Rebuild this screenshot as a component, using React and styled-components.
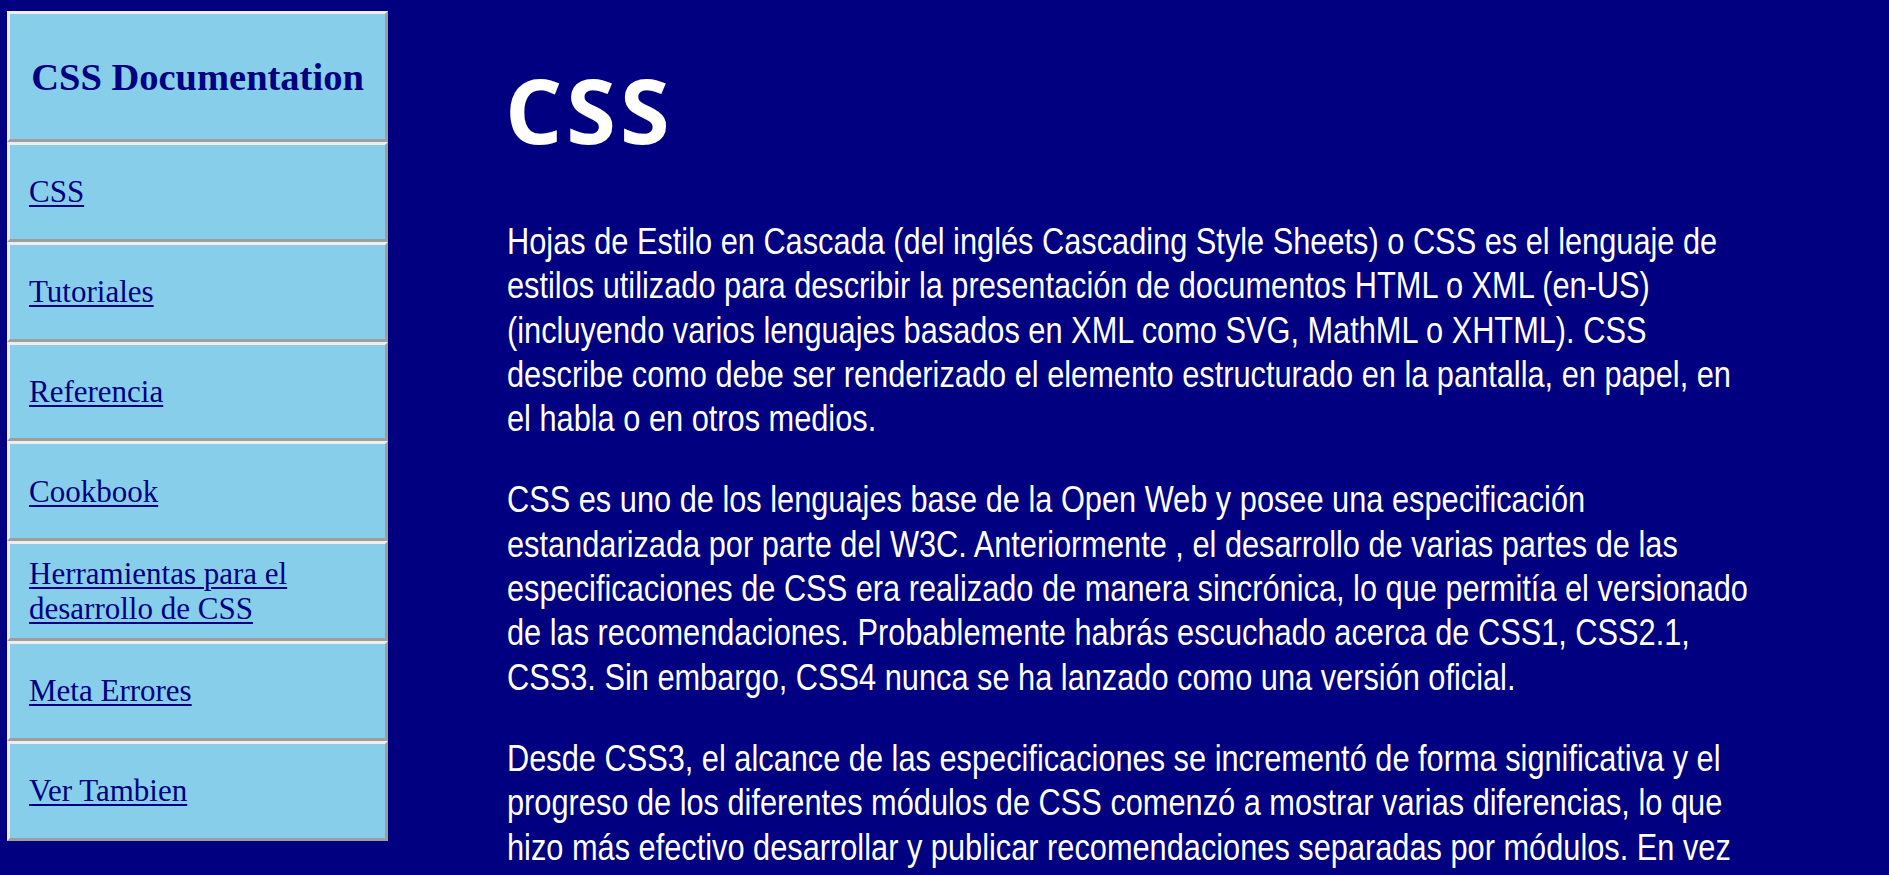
import React from "react";
import styled, { createGlobalStyle } from "styled-components";

const GlobalStyle = createGlobalStyle`
  html {
    overflow-x: hidden;
  }
  html, body {
    margin: 0;
    padding: 0;
    background: #000080;
  }
  body {
    font-family: "Liberation Serif", serif;
  }
`;

const Page = styled.div`
  display: flex;
  align-items: flex-start;
  padding: 11px 0 0 7px;
  min-height: 875px;
  box-sizing: border-box;
  background: #000080;
`;

const Sidebar = styled.nav`
  flex: 0 0 381px;
  display: flex;
  flex-direction: column;
`;

const Box = styled.div`
  box-sizing: border-box;
  height: ${(p) => p.$h}px;
  background: #87ceeb;
  border-style: solid;
  border-width: 3px;
  border-color: #eeeeee #9e9e9e #9e9e9e #eeeeee;
  display: flex;
  align-items: center;
  justify-content: ${(p) => (p.$center ? "center" : "flex-start")};
  padding: 0 ${(p) => (p.$center ? 0 : 19)}px;
`;

const NavTitle = styled.h2`
  margin: 0;
  font-family: "Liberation Serif", serif;
  font-weight: 700;
  font-size: 38.5px;
  color: #000080;
`;

const NavLink = styled.a`
  font-family: "Liberation Serif", serif;
  font-size: 31px;
  line-height: 35px;
  color: #000080;
  text-decoration: underline;
  text-decoration-thickness: 2px;
  text-underline-offset: 3px;
`;

const Main = styled.main`
  margin-left: 119px;
  width: 1253px;
  color: #ffffff;
`;

const Title = styled.h1`
  margin: 44px 0 0 -2px;
  font-family: "Open Sans", sans-serif;
  font-weight: 700;
  font-size: 90px;
  letter-spacing: 4px;
  line-height: 108px;
  color: #ffffff;
`;

/* Arial Narrow look: Liberation Sans compressed horizontally to 82% */
const Para = styled.p`
  margin: 0 0 37px 0;
  width: 1528px;
  font-family: "Liberation Sans", Arial, sans-serif;
  font-size: 37.5px;
  line-height: 44.3px;
  color: #ffffff;
  transform: scaleX(0.82);
  transform-origin: 0 0;
  &:first-of-type {
    margin-top: 56px;
  }
`;

const links = [
  "CSS",
  "Tutoriales",
  "Referencia",
  "Cookbook",
  "Herramientas para el desarrollo de CSS",
  "Meta Errores",
  "Ver Tambien",
];

export default function App() {
  return (
    <>
      <GlobalStyle />
      <Page>
        <Sidebar>
          <Box $h={131} $center>
            <NavTitle>CSS Documentation</NavTitle>
          </Box>
          {links.map((l) => (
            <Box key={l} $h={99.8}>
              <NavLink href="#">{l}</NavLink>
            </Box>
          ))}
        </Sidebar>
        <Main>
          <Title>CSS</Title>
          <Para>
            Hojas de Estilo en Cascada (del inglés Cascading Style Sheets) o CSS es el lenguaje de estilos
            utilizado para describir la presentación de documentos HTML o XML (en-US) (incluyendo varios
            lenguajes basados en XML como SVG, MathML o XHTML). CSS describe como debe ser renderizado el
            elemento estructurado en la pantalla, en papel, en el habla o en otros medios.
          </Para>
          <Para>
            CSS es uno de los lenguajes base de la Open Web y posee una especificación estandarizada por parte
            del W3C. Anteriormente , el desarrollo de varias partes de las especificaciones de CSS era realizado
            de manera sincrónica, lo que permitía el versionado de las recomendaciones. Probablemente habrás
            escuchado acerca de CSS1, CSS2.1, CSS3. Sin embargo, CSS4 nunca se ha lanzado como una versión
            oficial.
          </Para>
          <Para>
            Desde CSS3, el alcance de las especificaciones se incrementó de forma significativa y el progreso
            de los diferentes módulos de CSS comenzó a mostrar varias diferencias, lo que hizo más efectivo
            desarrollar y publicar recomendaciones separadas por módulos. En vez de versionar las
            especificaciones de CSS, la W3C ahora toma periódicamente una captura del último estado estable de
            la especificación de CSS.
          </Para>
        </Main>
      </Page>
    </>
  );
}
